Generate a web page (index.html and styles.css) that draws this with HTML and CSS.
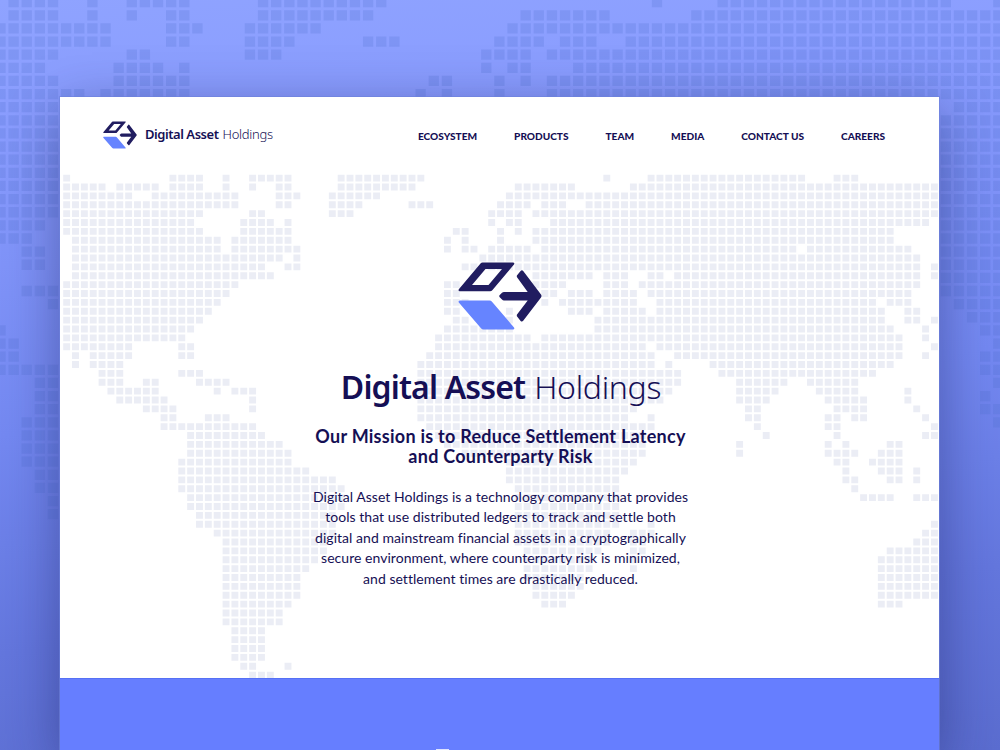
FILE: index.html
```html
<!DOCTYPE html>
<html lang="en">
<head>
<meta charset="utf-8">
<title>Digital Asset Holdings</title>
<link rel="stylesheet" href="styles.css">
</head>
<body>
<svg class="backdrop-map" width="1000" height="750" aria-hidden="true"><path data-map="-149.1,-3,13.13,13.13,10.3"/></svg>
<svg class="symbols" width="0" height="0" aria-hidden="true">
  <symbol id="mark" viewBox="0 0 84 68">
    <path class="mark-dark" fill-rule="evenodd" d="M24.5 .5H55.200Q57 1 56 2.500L34.500 28Q33.500 29.300 32 29.300H1.800Q0 29 .8 27.200L22.500 1.500Q23.300 .5 24.500 .5ZM27.500 7L14 22.900H30.500L44 7Z"/>
    <path class="mark-light" d="M1.800 38.500H31.500Q33 38.500 34 39.800L56 65.500Q57 67.300 55 67.500H25.500Q24 67.500 23 66.300L.8 40.500Q0 38.800 1.800 38.500Z"/>
    <path class="mark-dark" d="M46 30H69.700L59.200 15.500Q58.300 14 59.300 13L62.600 8.900Q64 7.600 65.200 9L83 32.500Q84 34 83 35.500L65.200 58.800Q64 60.200 62.600 58.900L59.300 54.800Q58.300 53.500 59.200 52.300L69.700 38.500H46Q44.800 38.500 44 37.500L41.500 34.900Q41 34 41.500 33.200L44 30.800Q44.800 30 46 30Z"/>
  </symbol>
</svg>
<main class="card">
  <section class="hero">
    <svg class="hero-map" width="879" height="581" aria-hidden="true"><path data-map="3.200,77.700,8.855,8.875,6.900"/></svg>
    <header class="header">
      <a class="brand"><svg class="brand-mark"><use href="#mark"/></svg><span class="wordmark wordmark-small"><b class="name">Digital Asset</b><span class="suffix">Holdings</span></span></a>
      <nav class="nav"><a>ECOSYSTEM</a><a>PRODUCTS</a><a>TEAM</a><a>MEDIA</a><a>CONTACT US</a><a>CAREERS</a></nav>
    </header>
    <div class="intro">
      <svg class="intro-mark"><use href="#mark"/></svg>
      <h1 class="wordmark wordmark-large"><b class="name">Digital Asset</b><span class="suffix">Holdings</span></h1>
      <h2 class="mission">Our Mission is to Reduce Settlement Latency<br>and Counterparty Risk</h2>
      <p class="copy">Digital Asset Holdings is a technology company that provides<br>tools that use distributed ledgers to track and settle both<br>digital and mainstream financial assets in a cryptographically<br>secure environment, where counterparty risk is minimized,<br>and settlement times are drastically reduced.</p>
    </div>
  </section>
  <section class="band"><i class="band-peek"></i></section>
</main>
<script src="map.js"></script>
</body>
</html>
```
FILE: styles.css
```css
* { box-sizing: border-box; }
body {
  margin: 0;
  width: 1000px;
  height: 750px;
  overflow: hidden;
  position: relative;
  background: linear-gradient(175deg, #8fa3ff 0%, #8a9dff 15%, #7489f2 52%, #6477de 78%, #5b6dd0 100%);
  font-family: Lato, "Open Sans", sans-serif;
  font-variant-ligatures: none;
  color: #150f55;
}
.backdrop-map { position: absolute; left: 0; top: 0; fill: rgba(76, 108, 205, .21); }
.symbols { position: absolute; }
.mark-dark { fill: #211d60; }
.mark-light { fill: #6684ff; }
.card {
  position: relative;
  width: 879px;
  margin: 97px 0 0 60px;
  box-shadow: 0 0 0 1px rgba(110, 130, 220, .6), 0 14px 54px rgba(24, 28, 90, .46);
}
.hero { position: relative; height: 581px; background: #fff; overflow: hidden; }
.hero-map { position: absolute; left: 0; top: 0; fill: #ebedf5; }
.header {
  position: relative;
  display: flex;
  justify-content: space-between;
  align-items: center;
  height: 76px;
  padding: 0 54px 0 43px;
}
.brand { display: flex; align-items: center; gap: 8px; }
.brand-mark { width: 34px; height: 28px; }
.wordmark { display: flex; font-family: "Noto Sans", sans-serif; white-space: nowrap; margin: 0; }
.wordmark .name { font-weight: 600; }
.wordmark .suffix { font-weight: 300; }
.wordmark-small { font-size: 13px; gap: 4px; letter-spacing: -.45px; padding-bottom: 3px; }
.wordmark-small .suffix { letter-spacing: -.3px; }
.nav { display: flex; gap: 37px; font-size: 10.100px; font-weight: 900; padding-top: 1px; }
.intro { position: relative; display: flex; flex-direction: column; align-items: center; padding-top: 89px; text-align: center; white-space: nowrap; }
.intro-mark { width: 84px; height: 68px; }
.wordmark-large { font-size: 32px; line-height: 44px; margin: 35px 0 0 3px; gap: 9px; letter-spacing: -.85px; }
.wordmark-large .suffix { letter-spacing: -.3px; }
.mission { margin: 18px 0 0 2px; font-size: 18px; line-height: 19.500px; font-weight: 700; letter-spacing: .26px; }
.copy { margin: 21px 0 0 2px; font-size: 14px; line-height: 20.400px; letter-spacing: .04px; }
.band { height: 80px; background: #667eff; border-top: 1px solid #5570f5; display: flex; align-items: flex-start; padding: 70px 0 0 376px; }
.band-peek { width: 13px; height: 3px; background: #dfe4ff; }
```
FILE: map.js
```js
// Inclusive column ranges of land cells, one line per map row.
const rows = `0 12-15 18 21-25 31-40 61 66-83 87-89
0-4 6-10 12-15 18 21 24-25 31-39 51-57 64-98
0-7 10-19 24-26 30-35 50-98
0-19 24-25 30-33 39-41 49-52 54-56 59-98
0-15 21-22 30-32 48-51 53-98
0-14 20-23 25 48 50-51 55-97
0-15 20-25 44-45 49 51 53-93
1-17 19-25 43 45 49 53-93
1-17 19-26 43 45-46 48-52 54-82 84-95
1-24 26 47-96
1-22 25-26 45-46 48-96 98
1-23 53-59 61-63 66-67 69-96 98
0-19 43-44 53-56 61-63 65-96
0-18 43-44 54-55 57-59 61-64 66-95
0-17 43-45 54 56-64 67-91 93-95
0-16 43-44 50 57-59 61-65 67-92 95-96
0-15 44-45 50 60-92 95-96 98
0-14 43-50 60-93 97
0-13 42-52 54-94 97
0-7 13-14 42-65 67-94 98
1 3-7 13-14 41-66 69-94 97
1 3-6 40-66 68 73-93
4-6 13-15 40-69 74-91
4-6 9-10 15-18 40-69 76-81 84-89
5-10 17 19-21 40-68 76-80 85-89 95
6-11 21 40-67 76-79 86-90 95
9-12 21 40-64 77-78 87-90 96
11-12 16-18 40-63 66 77-78 86-87 89-90 97
11-21 41-66 78 86-87 98
14-22 42-65 79 87 97-98
14-24 43-65 76 86 88 93-94
14-25 45-65 76 86-89 92-94
13-25 50-64 87-88 91-94
13-27 50-63 88 92-94 96
13-30 50-62 88-89 93-94 96
13-31 51-62 89
14-31 51-62 90-93 96-98
14-31 51-62
15-30 51-62
15-30 51-62 66 98
17-30 51-61 64-66 97-98
18-29 51-61 64-65 96-98
18-29 52-60 64-65 93-98
18-28 52-59 64 92-98
18-27 52-59 64 92-98
18-26 52-58 92-98
18-26 53-58 92-98
18-26 53-57 92-98
18-25 54-56 92-94
18-24
18-24
19-22
19-22
19-22
19-22
20-21 25
21-23`.split('\n');

document.querySelectorAll('[data-map]').forEach(path => {
  const [x0, y0, dx, dy, size] = path.dataset.map.split(',').map(Number);
  let d = '';
  rows.forEach((row, r) => row.split(' ').forEach(range => {
    const [from, to = from] = range.split('-').map(Number);
    for (let c = from; c <= to; c++) {
      d += `M${(x0 + c * dx).toFixed(2)} ${(y0 + r * dy).toFixed(2)}h${size}v${size}h-${size}z`;
    }
  }));
  path.setAttribute('d', d);
});
```
